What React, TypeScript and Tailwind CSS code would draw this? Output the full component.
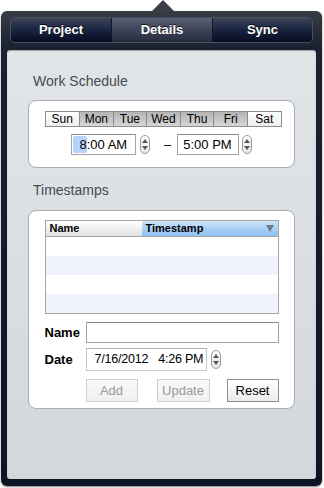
import React from "react"

const days = ["Sun", "Mon", "Tue", "Wed", "Thu", "Fri", "Sat"]

function Stepper({ className = "" }: { className?: string }) {
  return (
    <div
      className={`flex h-[19px] w-[10px] flex-col items-center justify-between rounded-full border border-[#9a9a9a] bg-gradient-to-b from-white to-[#e6e6e6] py-[3px] ${className}`}
    >
      <svg width="6" height="4" viewBox="0 0 6 4">
        <path d="M3 0 L6 4 L0 4 Z" fill="#555" />
      </svg>
      <svg width="6" height="4" viewBox="0 0 6 4">
        <path d="M0 0 L6 0 L3 4 Z" fill="#555" />
      </svg>
    </div>
  )
}

export default function App() {
  return (
    <div className="relative h-[488px] w-[324px] overflow-hidden bg-white font-['Liberation_Sans',Arial,sans-serif]">
      {/* popover arrow */}
      <svg className="absolute left-[151px] top-0" width="24" height="12" viewBox="0 0 24 12">
        <path d="M12 0 L24 12 L0 12 Z" fill="#3a3e46" />
      </svg>

      <div className="ml-[1px] mt-[11px] flex h-[475px] w-[321px] flex-col rounded-[6px] bg-gradient-to-b from-[#383c44] via-[#1a2130] via-[8%] to-[#0c1426] px-[6px] pt-[6px] shadow-[0_1px_2px_rgba(0,0,0,0.5)]">
        {/* tabs */}
        <div className="mx-[3px] grid h-[26px] grid-cols-[100px_102px_1fr] overflow-hidden rounded-[5px] border border-[#4a5060] text-[13px] font-bold text-white [text-shadow:0_-1px_0_rgba(0,0,0,0.8)]">
          <div className="flex items-center justify-center bg-gradient-to-b from-[#3c4458] via-[#1b2440] via-[50%] to-[#050c22]">
            Project
          </div>
          <div className="flex items-center justify-center border-x border-[#121828] bg-gradient-to-b from-[#5a6072] via-[#3e4457] via-[50%] to-[#262c3e]">
            Details
          </div>
          <div className="flex items-center justify-center bg-gradient-to-b from-[#3c4458] via-[#1b2440] via-[50%] to-[#050c22]">
            Sync
          </div>
        </div>

        {/* content */}
        <div className="mt-[7px] flex h-[429px] flex-col rounded-[3px] bg-gradient-to-b from-[#e2e5e8] to-[#d3d7db] px-[21px] pt-[22px] shadow-[inset_0_1px_1px_rgba(0,0,0,0.3)]">
          <div className="pl-[5px] text-[14px] leading-[18px] text-[#444b55]">Work Schedule</div>

          <div className="mt-[10px] flex h-[68px] flex-col items-center rounded-[8px] border border-[#a9adb2] bg-white pt-[10px]">
            <div className="ml-[3px] grid h-[16px] w-[237px] grid-cols-7 border border-[#8c8c8c] text-[12px] leading-[14px] text-black">
              {days.map((d, i) => {
                const on = i > 0 && i < 6
                return (
                  <div
                    key={d}
                    className={`flex items-center justify-center ${i > 0 ? "border-l border-[#8c8c8c]" : ""} ${
                      on
                        ? "bg-gradient-to-b from-[#b4b4b4] to-[#d6d6d6]"
                        : "bg-gradient-to-b from-white to-[#eeeeee]"
                    }`}
                  >
                    {d}
                  </div>
                )
              })}
            </div>

            <div className="mt-[7px] flex items-center text-[13px] text-black">
              <div className="ml-[-1px] flex h-[21px] w-[65px] items-center border border-[#a4a4a4] border-t-[#8a8a8a] bg-white pl-[1px]">
                <span className="flex h-[17px] items-center rounded-[2px] bg-[#b5d4fb] pl-[7px]">8</span>
                <span>:00 AM</span>
              </div>
              <Stepper className="ml-[4px]" />
              <span className="ml-[10px] w-[16px] text-center">–</span>
              <div className="ml-[1px] flex h-[21px] w-[62px] items-center justify-center border border-[#a4a4a4] border-t-[#8a8a8a] bg-white">
                5:00 PM
              </div>
              <Stepper className="ml-[3px]" />
            </div>
          </div>

          <div className="mt-[13px] pl-[5px] text-[14px] leading-[18px] text-[#444b55]">Timestamps</div>

          <div className="mt-[11px] flex h-[199px] flex-col items-center rounded-[8px] border border-[#a9adb2] bg-white pt-[9px]">
            <div className="w-[234px] border border-[#a6a6a6]">
              <div className="flex h-[16px] border-b border-[#a6a6a6] text-[11px] font-bold leading-[15px] text-black">
                <div className="w-[96px] bg-gradient-to-b from-white to-[#e2e2e2] pl-[4px]">Name</div>
                <div className="flex flex-1 items-center justify-between bg-gradient-to-b from-[#cfe5fa] via-[#a8d1f5] to-[#8cc1ef] pl-[4px] pr-[4px]">
                  <span>Timestamp</span>
                  <svg width="8" height="7" viewBox="0 0 8 7">
                    <path d="M0 0 L8 0 L4 7 Z" fill="#6c7a88" />
                  </svg>
                </div>
              </div>
              <div className="h-[19px] bg-white" />
              <div className="h-[19px] bg-[#eef3fd]" />
              <div className="h-[19px] bg-white" />
              <div className="h-[19px] bg-[#eef3fd]" />
            </div>

            <div className="mt-[8px] flex w-[234px] items-center">
              <span className="w-[41px] text-[13px] font-bold text-black">Name</span>
              <div className="h-[21px] flex-1 border border-[#a4a4a4] border-t-[#8a8a8a] bg-white" />
            </div>

            <div className="mt-[5px] flex w-[234px] items-center">
              <span className="w-[41px] text-[13px] font-bold text-black">Date</span>
              <div className="flex h-[23px] w-[121px] items-center whitespace-nowrap border border-[#c8c8c8] border-t-[#b0b0b0] bg-white pl-[8px] text-[12.5px] tracking-[-0.2px] text-black">
                7/16/2012&nbsp;&nbsp;&nbsp;4:26 PM
              </div>
              <Stepper className="ml-[4px]" />
            </div>

            <div className="mt-[8px] flex w-[234px] text-[13px]">
              <div className="ml-[41px] flex h-[23px] w-[52px] items-center justify-center border border-[#cfcfcf] bg-gradient-to-b from-[#fafafa] to-[#efefef] text-[#9a9a9a]">
                Add
              </div>
              <div className="ml-[19px] flex h-[23px] w-[53px] items-center justify-center border border-[#cfcfcf] bg-gradient-to-b from-[#fafafa] to-[#efefef] text-[#9a9a9a]">
                Update
              </div>
              <div className="ml-auto flex h-[23px] w-[52px] items-center justify-center border border-[#8e8e8e] bg-gradient-to-b from-white to-[#ececec] text-black">
                Reset
              </div>
            </div>
          </div>
        </div>
      </div>
    </div>
  )
}
